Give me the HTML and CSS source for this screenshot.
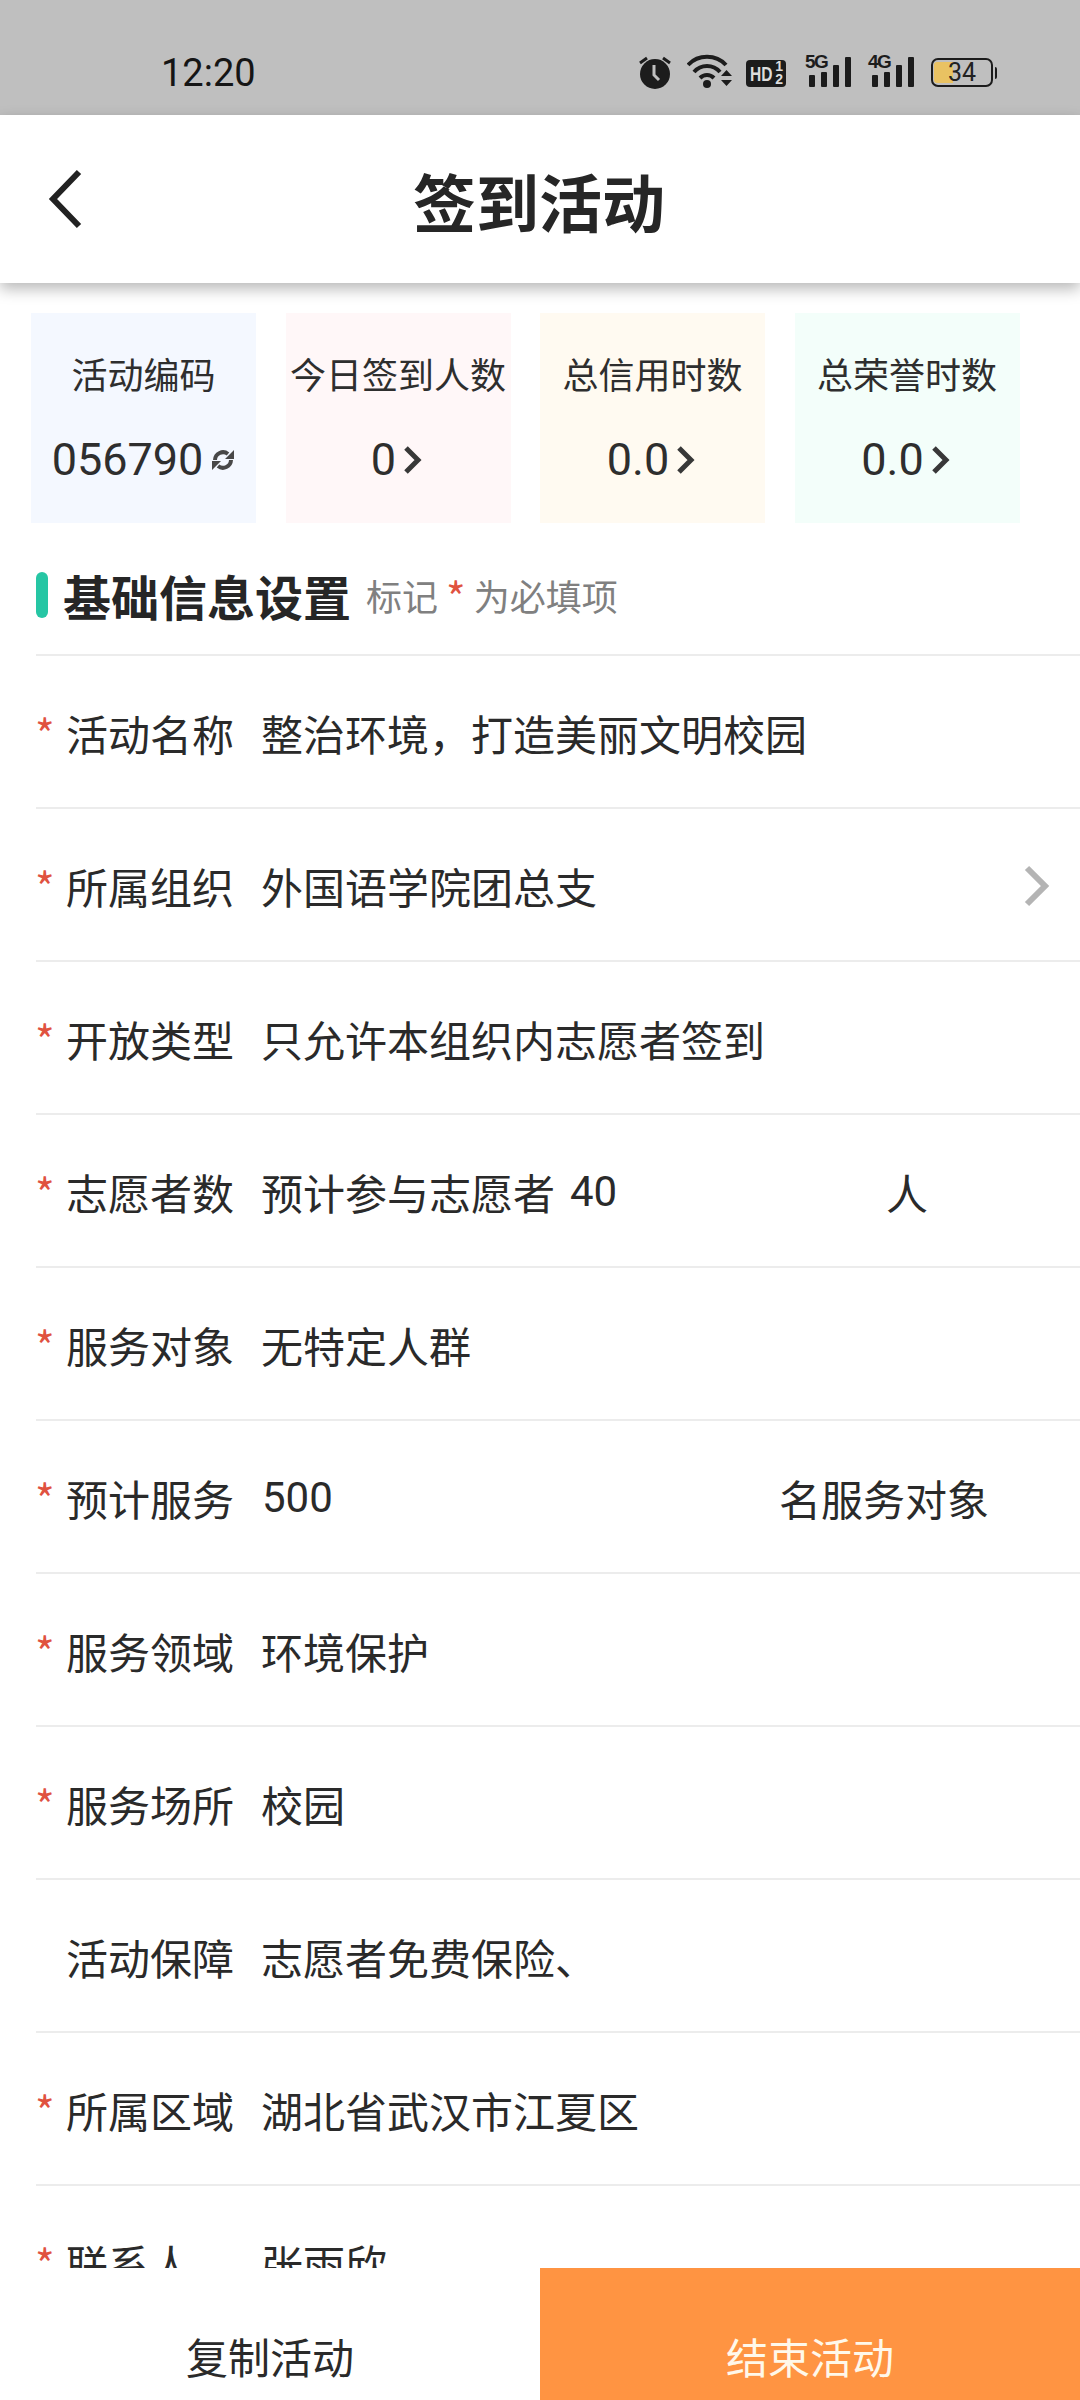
FILE: index.html
```html
<!DOCTYPE html>
<html lang="zh-CN">
<head>
<meta charset="utf-8">
<title>签到活动</title>
<link rel="stylesheet" href="styles.css">
</head>
<body>
<div class="page">
  <div class="status">
    <span class="time">12:20</span>
    <div class="status-icons">
      <svg class="alarm" width="32" height="33" viewBox="0 0 32 33"><path d="M1 7 8 2M31 7 24 2" stroke="#1c1c1c" stroke-width="3" fill="none"/><circle cx="16" cy="18" r="15" fill="#1c1c1c"/><path d="M15 9v10l5 5" stroke="#bfbfbf" stroke-width="3" fill="none"/></svg>
      <svg class="wifi" width="46" height="34" viewBox="0 0 46 34"><g fill="none" stroke="#1c1c1c" stroke-width="4"><path d="M1 11C11 0 29 0 39 11"/><path d="M7 18C14 10 26 10 33 18"/><path d="M13 24C17 20 23 20 27 24"/></g><circle cx="20" cy="30" r="4" fill="#1c1c1c"/><path d="M34 22h11l-5.500-6zM34 26h11l-5.500 6z" fill="#1c1c1c"/></svg>
      <span class="hd"><b class="hd-main">HD</b><span class="hd-sup"><span>1</span><span>2</span></span></span>
      <span class="sig"><span class="gen">5G</span><svg class="bars" width="42" height="30" viewBox="0 0 42 30"><g fill="#1c1c1c"><rect x="0" y="18" width="6" height="12" rx="1"/><rect x="12" y="15" width="6" height="15" rx="1"/><rect x="24" y="8" width="6" height="22" rx="1"/><rect x="36" y="0" width="6" height="30" rx="1"/></g></svg></span>
      <span class="sig"><span class="gen">4G</span><svg class="bars" width="42" height="30" viewBox="0 0 42 30"><g fill="#1c1c1c"><rect x="0" y="18" width="6" height="12" rx="1"/><rect x="12" y="15" width="6" height="15" rx="1"/><rect x="24" y="8" width="6" height="22" rx="1"/><rect x="36" y="0" width="6" height="30" rx="1"/></g></svg></span>
      <span class="batt"><span class="batt-body"><span class="batt-fill"></span><span class="batt-num">34</span></span><span class="batt-tip"></span></span>
    </div>
  </div>

  <header class="nav">
    <svg class="back" width="36" height="60" viewBox="0 0 36 60"><path d="M32 3 6 30l26 27" fill="none" stroke="#222" stroke-width="6"/></svg>
    <h1 class="title">签到活动</h1>
  </header>

  <section class="stats">
    <div class="stat blue"><div class="stat-label">活动编码</div><div class="stat-val">056790<svg class="refresh" width="24" height="24" viewBox="0 0 24 24"><path d="M4 12A8 8 0 0 1 17 6M20 12A8 8 0 0 1 7 18" fill="none" stroke="#484848" stroke-width="4"/><path d="M23 2v9h-9zM1 22v-9h9z" fill="#484848"/></svg></div></div>
    <div class="stat pink"><div class="stat-label">今日签到人数</div><div class="stat-val">0<svg class="chev" width="22" height="30" viewBox="0 0 22 30"><path d="M3 3l12 12L3 27" fill="none" stroke="#383838" stroke-width="5"/></svg></div></div>
    <div class="stat cream"><div class="stat-label">总信用时数</div><div class="stat-val">0.0<svg class="chev" width="22" height="30" viewBox="0 0 22 30"><path d="M3 3l12 12L3 27" fill="none" stroke="#383838" stroke-width="5"/></svg></div></div>
    <div class="stat mint"><div class="stat-label">总荣誉时数</div><div class="stat-val">0.0<svg class="chev" width="22" height="30" viewBox="0 0 22 30"><path d="M3 3l12 12L3 27" fill="none" stroke="#383838" stroke-width="5"/></svg></div></div>
  </section>

  <div class="sec-head">
    <span class="sec-bar"></span>
    <h2 class="sec-title">基础信息设置</h2>
    <span class="sec-hint">标记 <em>*</em> 为必填项</span>
  </div>

  <div class="rows">
    <div class="row"><span class="star">*</span><span class="label">活动名称</span><span class="val">整治环境，打造美丽文明校园</span></div>
    <div class="row"><span class="star">*</span><span class="label">所属组织</span><span class="val grow">外国语学院团总支</span><svg class="row-chev" width="28" height="44" viewBox="0 0 28 44"><path d="M4 4l18 18L4 40" fill="none" stroke="#b4b4b4" stroke-width="6"/></svg></div>
    <div class="row"><span class="star">*</span><span class="label">开放类型</span><span class="val">只允许本组织内志愿者签到</span></div>
    <div class="row"><span class="star">*</span><span class="label">志愿者数</span><span class="val">预计参与志愿者</span><span class="num num-a">40</span><span class="val">人</span></div>
    <div class="row"><span class="star">*</span><span class="label">服务对象</span><span class="val">无特定人群</span></div>
    <div class="row"><span class="star">*</span><span class="label">预计服务</span><span class="num num-b">500</span><span class="val">名服务对象</span></div>
    <div class="row"><span class="star">*</span><span class="label">服务领域</span><span class="val">环境保护</span></div>
    <div class="row"><span class="star">*</span><span class="label">服务场所</span><span class="val">校园</span></div>
    <div class="row"><span class="star none"></span><span class="label">活动保障</span><span class="val">志愿者免费保险、</span></div>
    <div class="row"><span class="star">*</span><span class="label">所属区域</span><span class="val">湖北省武汉市江夏区</span></div>
    <div class="row"><span class="star">*</span><span class="label">联系人</span><span class="val">张雨欣</span></div>
  </div>

  <footer class="bottom">
    <button class="btn">复制活动</button>
    <button class="btn primary">结束活动</button>
  </footer>
</div>
</body>
</html>
```
FILE: styles.css
```css
* { box-sizing: border-box; }
html, body { margin: 0; padding: 0; background: #fff; }
body { font-family: "Noto Sans CJK SC", "Noto Sans", sans-serif; color: #262626; }
.page { position: relative; width: 1080px; height: 2400px; overflow: hidden; background: #fff; }

.status { height: 115px; background: #bfbfbf; display: flex; align-items: flex-start; justify-content: space-between; padding: 54px 83px 0 161px; }
.time { font-family: Roboto, sans-serif; font-size: 38px; line-height: 36px; margin-top: 1px; color: #151515; }
.status-icons { display: flex; align-items: flex-start; }
.alarm { display: block; margin: 2px 16px 0 0; }
.wifi { display: block; margin-right: 13px; }
.hd { display: flex; position: relative; width: 40px; height: 27px; margin: 6px 19px 0 0; background: #1c1c1c; border-radius: 4px; font-family: "Liberation Sans", sans-serif; font-weight: 700; color: #dcdcdc; }
.hd-main { display: block; width: 30px; font-size: 21px; line-height: 27px; margin-left: 4px; transform: scaleX(.74); transform-origin: left center; }
.hd-sup { position: absolute; right: 3px; top: 0; display: flex; flex-direction: column; align-items: center; font-size: 14px; line-height: 13px; }
.sig { display: block; position: relative; width: 46px; height: 36px; margin-right: 17px; }
.bars { position: absolute; right: 0; bottom: 3px; display: block; }
.gen { position: absolute; left: 0; top: -1px; font-family: "Liberation Sans", sans-serif; font-weight: 700; font-size: 19px; line-height: 18px; letter-spacing: -1.500px; color: #1c1c1c; }
.batt { display: flex; align-items: center; gap: 2px; margin-top: 4px; }
.batt-body { position: relative; width: 62px; height: 29px; border: 2px solid #1c1c1c; border-radius: 7px; overflow: hidden; display: flex; align-items: center; justify-content: center; }
.batt-fill { position: absolute; left: 1px; top: 2px; bottom: 2px; width: 19px; background: #e9c262; border-radius: 3px 0 0 3px; }
.batt-num { position: relative; font-family: Roboto, sans-serif; font-size: 25px; line-height: 1; color: #222; }
.batt-tip { width: 2px; height: 12px; background: #1c1c1c; border-radius: 0 2px 2px 0; }

.nav { position: relative; z-index: 1; height: 168px; background: #fff; box-shadow: 0 6px 14px rgba(0,0,0,.28); display: flex; align-items: center; justify-content: center; }
.back { position: absolute; left: 47px; top: 54px; }
.title { margin: 0 2px 0 0; font-size: 63px; font-weight: 700; line-height: 1; color: #262626; }

.stats { display: flex; gap: 29.500px; padding: 30px 0 0 31px; }
.stat { width: 225px; height: 210px; display: flex; flex-direction: column; align-items: center; padding-top: 35px; }
.blue { background: #f4f8ff; }
.pink { background: #fff7f8; }
.cream { background: #fffaf1; }
.mint { background: #f3fefa; }
.stat-label { font-size: 36px; line-height: 50px; color: #2e2e2e; white-space: nowrap; }
.stat-val { display: flex; align-items: center; margin-top: 37px; font-family: Roboto, sans-serif; font-size: 45px; line-height: 50px; color: #2e2e2e; }
.refresh { margin-left: 8px; }
.chev { margin-left: 7px; }

.sec-head { display: flex; align-items: center; height: 131px; padding: 12px 0 0 36px; }
.sec-bar { width: 12px; height: 46px; background: #26c6a4; border-radius: 6px; margin-right: 15px; }
.sec-title { margin: 0; font-size: 48px; font-weight: 700; line-height: 1; color: #262626; }
.sec-hint { margin-left: 15px; font-size: 36px; line-height: 1; color: #808080; }
.sec-hint em { font-style: normal; font-size: 42px; line-height: 0; vertical-align: -3px; color: #e0523f; }

.rows { margin-left: 36px; }
.row { display: flex; align-items: center; height: 153px; border-top: 2px solid #ececec; padding-top: 2px; font-size: 42px; color: #2a2a2a; }
.star { width: 31px; margin-left: -1px; color: #e0523f; font-size: 42px; line-height: 1; flex: none; }
.label { width: 195px; flex: none; }
.val { white-space: nowrap; }
.grow { flex: 1; }
.row-chev { margin-right: 29px; }
.num { font-family: Roboto, sans-serif; font-size: 42px; white-space: nowrap; }
.num-a { margin-left: 15px; width: 316px; }
.num-b { margin-left: 1px; width: 517px; }

.bottom { position: absolute; left: 0; right: 0; top: 2268px; height: 132px; display: flex; background: #fff; }
.btn { flex: 1; border: 0; background: #fff; font: inherit; font-size: 42px; color: #2a2a2a; padding: 42px 0 0; }
.primary { background: #ff9442; color: #fff8ea; }
```
